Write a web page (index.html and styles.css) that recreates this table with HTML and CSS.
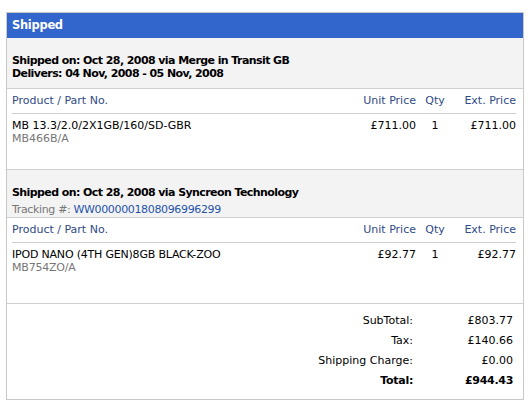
FILE: index.html
```html
<!DOCTYPE html>
<html>
<head>
<meta charset="utf-8">
<link rel="stylesheet" href="styles.css">
</head>
<body>
<div class="box">
  <div class="hd">Shipped</div>

  <div class="info info-1">
    <div class="b">Shipped on: Oct 28, 2008 via Merge in Transit GB</div>
    <div class="b">Delivers: 04 Nov, 2008 - 05 Nov, 2008</div>
  </div>
  <div class="items items-1">
    <table>
      <thead>
        <tr><th class="c-prod">Product / Part No.</th><th class="c-unit">Unit Price</th><th class="c-qty">Qty</th><th class="c-ext">Ext. Price</th></tr>
      </thead>
      <tbody>
        <tr>
          <td class="c-prod">MB 13.3/2.0/2X1GB/160/SD-GBR<div class="part">MB466B/A</div></td>
          <td class="c-unit">£711.00</td><td class="c-qty">1</td><td class="c-ext">£711.00</td>
        </tr>
      </tbody>
    </table>
  </div>

  <div class="info info-2">
    <div class="b">Shipped on: Oct 28, 2008 via Syncreon Technology</div>
    <div class="track">Tracking #: <span class="link">WW0000001808096996299</span></div>
  </div>
  <div class="items items-2">
    <table>
      <thead>
        <tr><th class="c-prod">Product / Part No.</th><th class="c-unit">Unit Price</th><th class="c-qty">Qty</th><th class="c-ext">Ext. Price</th></tr>
      </thead>
      <tbody>
        <tr>
          <td class="c-prod name-2">IPOD NANO (4TH GEN)8GB BLACK-ZOO<div class="part">MB754ZO/A</div></td>
          <td class="c-unit">£92.77</td><td class="c-qty">1</td><td class="c-ext">£92.77</td>
        </tr>
      </tbody>
    </table>
  </div>

  <div class="totals">
    <div class="lbl">SubTotal:</div><div class="val">£803.77</div>
    <div class="lbl">Tax:</div><div class="val">£140.66</div>
    <div class="lbl">Shipping Charge:</div><div class="val">£0.00</div>
    <div class="lbl tb">Total:</div><div class="val tb">£944.43</div>
  </div>
</div>
</body>
</html>
```

FILE: styles.css
```css
html, body {
  margin: 0;
  padding: 0;
  background: #fff;
}
body {
  font-family: "DejaVu Sans", Verdana, sans-serif;
  font-size: 11px;
  line-height: 13px;
  color: #000;
}
.box {
  margin: 12px 0 0 6px;
  width: 516px;
  border: 1px solid #c8c8c8;
}
.hd {
  height: 25px;
  line-height: 25px;
  background: #3366cc;
  color: #fff;
  font-weight: bold;
  font-size: 11.5px;
  padding-left: 5px;
  letter-spacing: -0.3px;
}
.b {
  font-weight: bold;
  letter-spacing: -0.58px;
}
.info {
  background: #f3f3f3;
  padding: 16px 5px 8px;
  border-bottom: 1px solid #cfcfcf;
}
.info-2 {
  padding-bottom: 1px;
}
.track {
  margin-top: 4px;
  color: #777;
  letter-spacing: -0.35px;
}
.link {
  color: #2553a8;
}
.items {
  padding: 0 7px 0 5px;
  border-bottom: 1px solid #cfcfcf;
}
.items table {
  width: 504px;
  border-collapse: collapse;
  table-layout: fixed;
}
.items th {
  font-weight: normal;
  color: #2f4a86;
  padding: 5px 0 6px;
  border-bottom: 1px solid #d0d0d0;
}
.items td {
  padding: 5px 0 24px;
  vertical-align: top;
}
.items-2 td {
  padding-bottom: 29px;
}
.name-2 {
  letter-spacing: -0.2px;
}
.c-prod { text-align: left; }
.c-unit { text-align: right; width: 130px; }
.c-qty { text-align: center; width: 38px; }
.c-ext { text-align: right; width: 62px; padding-right: 1px; }
.part {
  color: #777;
}
.totals {
  display: grid;
  grid-template-columns: 1fr 99px;
  padding: 7px 10px 8px 5px;
  line-height: 20px;
}
.lbl { text-align: right; padding-right: 1px; }
.val { text-align: right; }
.tb { font-weight: bold; letter-spacing: -0.3px; }
```
